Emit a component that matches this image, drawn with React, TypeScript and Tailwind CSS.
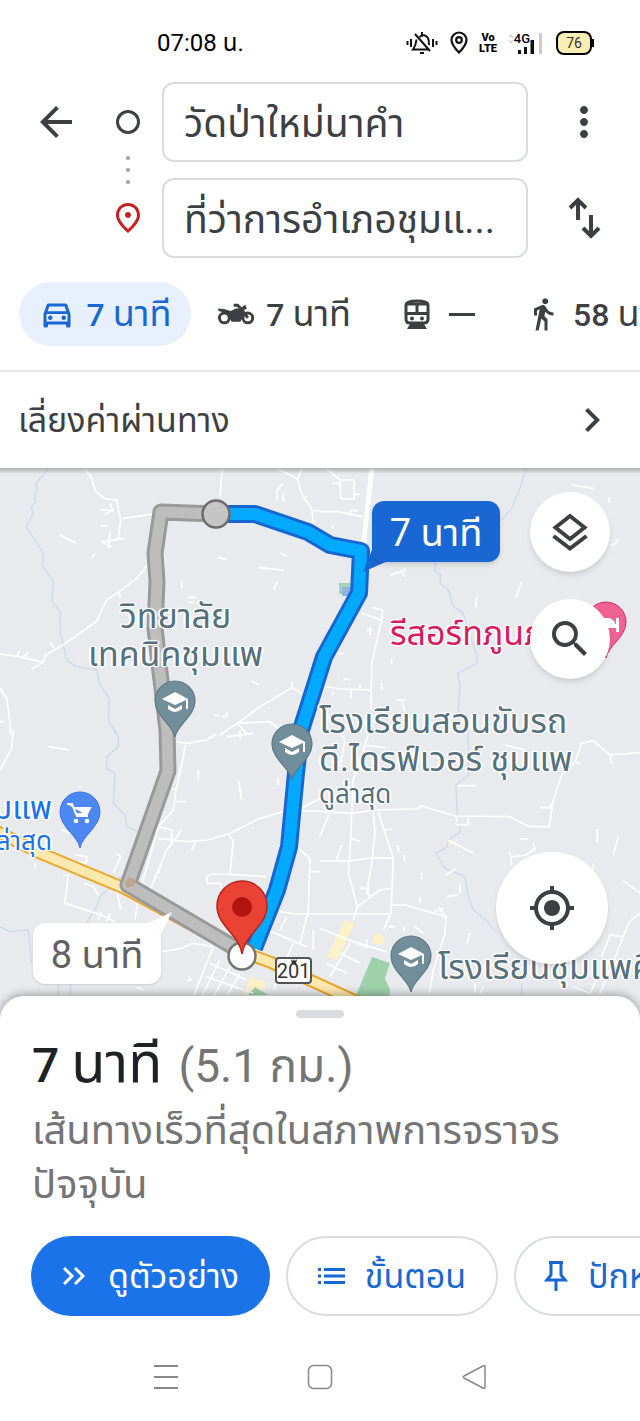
import { useState, type ReactNode } from "react";
import {
  MdArrowBack,
  MdChevronRight,
  MdDirectionsWalk,
  MdGpsFixed,
  MdMoreVert,
  MdOutlineDirectionsCar,
  MdOutlinePlace,
  MdSearch,
} from "react-icons/md";

const PIN = "M0 36C-2 24-20 15-20 0A20 20 0 1 1 20 0C20 15 2 24 0 36Z";

function SchoolPin({ x, y }: { x: number; y: number }) {
  return (
    <g transform={`translate(${x} ${y})`}>
      <path d={PIN} fill="#738e9b" stroke="#5c7884" strokeWidth="1.2" />
      <path d="M0-9L-13-2 0 4 11-1V8H13V-2ZM-7 4V8Q0 14 7 8V4L0 8Z" fill="#fff" />
    </g>
  );
}

function StatusIcons() {
  return (
    <div className="flex items-center gap-3">
      <svg width="32" height="24" viewBox="0 0 32 24" fill="none" stroke="#111" strokeWidth="2">
        <path d="M1.500 10v4M5 8v8M27 8v8M30.500 10v4M9 3l15 17M13.500 6q5-4 8.500 1 1 2 1 7M10.500 8.500q-.5 6-3.500 10h16M16 1v3M14 22h4" />
      </svg>
      <svg width="18" height="24" viewBox="0 0 18 24" fill="none" stroke="#111" strokeWidth="2.200">
        <path d="M9 21.500Q1.500 14 1.500 9a7.500 7.500 0 0 1 15 0Q16.500 14 9 21.500Z" />
        <circle cx="9" cy="9" r="2.800" />
      </svg>
      <div className="flex w-4 flex-col items-center font-['Liberation_Sans_Narrow','Roboto'] text-[11px] leading-[11px] font-black text-black">
        <span>Vo</span>
        <span>LTE</span>
      </div>
      <div className="flex h-6 w-9 items-start">
        <svg width="7" height="20" viewBox="0 0 7 20" fill="none" stroke="#ccc" strokeWidth="1.500">
          <path d="M1 6l2.500-3L6 6M1 9l2.500 3L6 9" />
        </svg>
        <span className="h-3 text-[13px] leading-4 font-medium text-black">4G</span>
        <svg width="26" height="24" viewBox="0 0 26 24" className="-ml-3 shrink-0">
          <path d="M0 19h3v4H0zM6 16h3v7H6zM12.500 9H16v14h-3.500z" fill="#111" />
          <path d="M21 2h3v21h-3z" fill="#ccc" />
        </svg>
      </div>
      <div className="flex items-center">
        <span className="flex h-6 w-9 items-center justify-center rounded-lg border-2 border-black bg-[#fbeeb5] text-sm text-[#333]">
          76
        </span>
        <span className="h-2 w-0.5 bg-black" />
      </div>
    </div>
  );
}

function MapDrawing() {
  return (
    <svg
      viewBox="0 468 640 548"
      preserveAspectRatio="xMidYMid slice"
      className="absolute inset-0 h-full w-full"
      role="img"
      aria-label="แผนที่เส้นทาง"
    >
      <rect x="-2000" y="0" width="5000" height="2000" fill="#e8eaee" />
      <g fill="none" stroke="#cfd9ec" strokeWidth="4" strokeLinejoin="round">
        <path
          transform="translate(0 465) scale(.33333)"
          d="M145 10L125 35 108 55 112 75 103 95 108 110 95 125 98 150 78 185 105 225 130 265 128 305 160 350 155 410 182 440 180 500 200 585 230 605 290 615 300 660 328 700 325 770 355 810"
        />
        <path
          transform="translate(320 465) scale(.33333)"
          d="M618 10L600 70 575 130 550 160 400 240 345 290V318L362 330 360 355 385 375 400 425 430 445 470 570 472 595 412 625 420 660 415 735 445 795"
        />
        <path
          transform="translate(0 730) scale(.33333)"
          d="M340 0L355 20V50L320 80V115L345 130 340 220 375 255 380 290 415 305M375 430L300 500 290 530 220 640 210 800M0 590L30 605 85 600 90 650 95 700M175 765V795"
        />
        <path
          transform="translate(320 730) scale(.33333)"
          d="M445 0V135L408 165 412 270 423 305 385 330 382 350 348 370 375 415 435 440 445 500 460 540 505 575 525 605M605 760V800"
        />
      </g>
      <g fill="#fdf1c8">
        <path d="M345 920l10 3-18 37-10-3zM375 932l10 5-3 8-10-2zM250 977l17 6-7 12h-15z" />
        <path d="M448 841l14 7-14-5z" />
      </g>
      <path d="M372 957l18 6-5 15 5 12-2 20h-38zM255 987l13 8h-20z" fill="#9fd2ab" />
      <path d="M339 583h11v11h-11z" fill="#a3d3b2" />
      <path d="M342 587h10v9h-10z" fill="#8fb0e8" />
      <g fill="none" stroke="#fff" strokeWidth="5" strokeLinejoin="round">
        <path
          transform="translate(0 465) scale(.33333)"
          d="M255 10L275 40 288 80 312 100 350 105 362 165 355 220M368 160L460 147M667 10L660 95M0 567L60 575 130 592 137 570 190 540 290 468 320 405 355 382 410 340 443 300M355 382L362 400M50 575l8-18M65 580l20-18M130 592l-35 20M150 530l12 20M180 210L228 235M285 265l-10 13M655 278l25 5M775 308l75 7M840 265l20 8M545 348v22M832 350l-12 25M565 397h22M565 412h18M305 230L375 220M330 200L325 250M305 230l30 15M300 135h35l-20 15M330 115l10 25M302 183h22M830 10L893 42 903 80 912 100 935 130 940 175M893 42L905 12M912 100l8-8M935 137h25M848 55L830 80 832 105M850 85v25M755 648l22 12M642 750h15M680 740v15h-15M660 810L712 775 780 725 875 668 905 685M875 668v-20M712 775L810 770 840 795M712 775L745 810M0 670L20 700 30 770 32 810M0 770h12"
        />
        <path
          transform="translate(320 465) scale(.33333)"
          d="M0 140H50L130 155M88 152l5-15h20M20 10L60 45 62 100 102 103V45H60M35 55h25M102 88h18M755 60L822 70M868 95v20M895 220q-5 20-25 20M605 350L588 398M470 395l-3 32M210 330L245 320 255 335M245 322l12-10M125 445L185 465 188 435 158 428M185 465L165 550 155 600 153 735M150 485v25M140 495h18M20 665L60 672 153 675M120 672v-15M93 675v25M70 640l20 5M215 578v20M185 655v20M230 705h28M245 705l10 35M50 565h20M38 690v-10M40 190l-5-10"
        />
        <path
          transform="translate(0 730) scale(.33333)"
          d="M530 35L560 40 620 30 650 10M555 45L550 80 528 180 520 240 475 290 415 500 405 570M515 178h15M530 215h28M475 325L560 335 620 330 685 312 780 265 850 245M475 290L515 300V335M685 312l15 20L690 430M545 300L500 360 450 480M680 20L760 10M720 0v25M595 120v30M715 150l10 60M835 145v20M145 50l63 10M40 0L35 55 0 120M575 360l12-25M475 430l10-30M190 435h22M205 435L195 520 290 550 345 575M250 460l30 10 15 25M350 370l12 10-22 50M362 540l-12-60M620 440l20-8 80 3 80 5M620 440v20h40l10 50M890 243L960 243M905 235l55-30M890 350l40 35-5 155-25 100M930 425h30M840 545l50 7H960M780 590l140 60M840 600l20-40M485 665l60-10 35-15 60 10M640 650L580 800M620 740L760 790M660 690L605 800M690 710L640 800M720 730L680 800M630 700L740 750M565 740l10 10-15 2M410 770l20 10M940 600v60M880 640L820 780M225 375l35 5v18h-30M185 300l40 15M105 400v15M330 550l-10 25M305 545l-12 25"
        />
        <path
          transform="translate(320 730) scale(.33333)"
          d="M55 0L75 30 60 110M150 0L130 60 100 150 95 250M130 45l65 8M0 245L100 250 160 240 290 237 305 228 405 258 570 260 628 290H688L700 210 725 135 765 95 785 40 820 32 870 75 960 68M870 75l5 25M765 95l15 8M662 233h30v-15M410 262v22h35v-22M415 167h53M30 245L0 320M95 250L92 330 85 430 112 530 100 570M160 245L165 310 155 400 140 490 155 500M120 475h25v20M175 245L205 340 220 385 213 550 190 600M0 393H85L160 383 220 385M112 530L180 480 213 475M0 552H213M213 525H255L378 560 375 610 340 720 328 790M355 530l20 28M345 545l25-10M385 330L460 370M378 435l30-20M380 500l35-5M420 465v25M305 430v20M300 500v20M235 345v20M250 375l5 18M832 298v38M895 320l-15 55M910 453l50 35M960 550L928 575 910 620 870 615 845 680M910 620L870 720 840 790M600 327h25M570 365l5 40M575 380L620 375 645 355 640 340M50 390l15-45M95 325l25 10M195 300l20-3M0 595L100 635 200 665M60 670l60 30M30 740L90 640M20 700l60 30M110 640l30 12v-25M465 760v30M440 640l10-30M250 605l5-15M205 590h20M285 590l25 20M820 400v20M640 540v-15M555 45l60 15M760 770l50 20 20-40M480 790l10-20"
        />
        <path d="M372 468L363 548" />
      </g>
      <g fill="none" strokeLinejoin="round">
        <path d="M-100 788L0 833 40 853 124 888 242 952 270 962 380 1012" stroke="#eba72c" strokeWidth="13" />
        <path d="M-100 788L0 833 40 853 124 888 242 952 270 962 380 1012" stroke="#fde8ad" strokeWidth="9" />
        <path d="M216 514L161 512 155 553 157 582 155 628 160 672 167 730 168 771 128 885 242 952" stroke="#999" strokeWidth="17" />
        <path d="M216 514L161 512 155 553 157 582 155 628 160 672 167 730 168 771 128 885 242 952" stroke="#bdbdbd" strokeWidth="11" />
        <path d="M125 882l4-5 7 3-2 6-8 2z" fill="#c0a48e" />
        <path d="M216 514H255L308 532 330 545 361 551 359 593 324 657 301 730 296 773 289 847 277 890 254 948" stroke="#1766d0" strokeWidth="18" />
        <path d="M216 514H255L308 532 330 545 361 551 359 593 324 657 301 730 296 773 289 847 277 890 254 948" stroke="#03a9ff" strokeWidth="12" />
      </g>
      <circle cx="216" cy="514" r="13.500" fill="#c5c5c5" stroke="#6d6d6d" strokeWidth="2.500" />
      <circle cx="242" cy="956" r="13.500" fill="#fff" stroke="#757575" strokeWidth="2.500" />
      <SchoolPin x={175} y={701} />
      <SchoolPin x={292} y={744} />
      <SchoolPin x={411} y={956} />
      <g transform="translate(80 812)">
        <path d={PIN} fill="#4d87f2" stroke="#3d75dd" />
        <path d="M-13-8h5l5 12H8M-7-4H10L7 2H-5" fill="#fff" stroke="#fff" strokeWidth="2" />
        <circle cx="-4" cy="9" r="2.300" fill="#fff" />
        <circle cx="7" cy="9" r="2.300" fill="#fff" />
      </g>
      <g transform="translate(606 622)">
        <path d={PIN} fill="#f06292" stroke="#d92a6b" />
        <path d="M-13-7h3v9h20v-6h3v14h-3v-4h-20v4h-3zM-8-4h12l5 4v3H-8z" fill="#fff" />
      </g>
      <path
        d="M242 954C239 934 217 926 217 906A25 25 0 0 1 267 906C267 926 245 934 242 954Z"
        fill="#ea4335"
        stroke="#b3261e"
        strokeWidth="1.500"
      />
      <circle cx="242" cy="907" r="10" fill="#b31412" />
      <path d="M372 550L363 572 390 560z" fill="#1967d2" />
      <path d="M146 924l26-12-12 24z" fill="#fff" />
    </svg>
  );
}

const halo =
  "[text-shadow:0_0_2px_#fff,1px_1px_1px_#fff,-1px_-1px_1px_#fff,1px_-1px_1px_#fff,-1px_1px_1px_#fff,2px_0_1px_#fff,-2px_0_1px_#fff]";

function MapLabel({ className, children }: { className: string; children: ReactNode }) {
  return <div className={`absolute whitespace-nowrap ${halo} ${className}`}>{children}</div>;
}

function MapView() {
  return (
    <section className="relative h-[548px] overflow-hidden" aria-label="แผนที่">
      <MapDrawing />
      <MapLabel className="top-[129px] left-[88px] text-center text-[34px] leading-[38px] text-[#56707c]">
        วิทยาลัย
        <br />
        เทคนิคชุมแพ
      </MapLabel>
      <MapLabel className="top-[234px] left-[319px] text-[34px] leading-[38px] text-[#56707c]">
        โรงเรียนสอนขับรถ
        <br />
        ดี.ไดรฟ์เวอร์ ชุมแพ
        <div className="text-[26px] leading-8">ดูล่าสุด</div>
      </MapLabel>
      <MapLabel className="top-[146px] left-[390px] text-[34px] leading-[38px] text-[#d81b60]">รีสอร์ทภูนภา</MapLabel>
      <MapLabel className="top-[480px] left-[438px] text-[34px] leading-[38px] text-[#56707c]">โรงเรียนชุมแพศึกษา</MapLabel>
      <MapLabel className="top-[323px] right-[588px] text-right text-[32px] leading-[34px] text-[#1a73e8]">
        ชุมแพ
        <div className="text-[26px] leading-8">ดูล่าสุด</div>
      </MapLabel>
      <div className="absolute top-[489px] left-[275px] flex h-[27px] w-[37px] items-center justify-center rounded-sm border-2 border-[#555] bg-white font-['Roboto'] text-xl text-[#333]">
        201
        <svg width="6" height="5" viewBox="0 0 6 5" fill="currentColor" className="absolute top-0">
          <path d="M0 0l2 2 1-2 1 2 2-2-1 5H1z" />
        </svg>
      </div>
      <div className="absolute top-[33px] left-[372px] flex h-[61px] w-32 items-center justify-center rounded-xl bg-[#1967d2] pt-1 text-[38px] whitespace-nowrap text-white shadow-md">
        7 นาที
      </div>
      <div className="absolute top-[455px] left-[33px] flex h-[61px] w-32 items-center justify-center rounded-xl bg-white pt-1 text-[38px] whitespace-nowrap text-[#616161] shadow-sm">
        8 นาที
      </div>
      <div className="pointer-events-none absolute inset-x-0 top-0 h-1.5 bg-linear-to-b from-black/25 to-transparent" />
      <button
        type="button"
        aria-label="ชั้นข้อมูล"
        className="absolute top-6 right-[30px] flex size-20 items-center justify-center rounded-full bg-white text-[#3c4043] shadow-md"
      >
        <svg width="36" height="40" viewBox="0 0 36 40" fill="none" stroke="currentColor" strokeWidth="4">
          <path d="M18 4L32.500 15.500 18 27 3.500 15.500ZM1.500 24L18 36.500 34.500 24" />
        </svg>
      </button>
      <button
        type="button"
        aria-label="ค้นหา"
        className="absolute top-[131px] right-[30px] flex size-20 items-center justify-center rounded-full bg-white text-[#3c4043] shadow-md"
      >
        <MdSearch size={48} />
      </button>
      <button
        type="button"
        aria-label="ตำแหน่งของฉัน"
        className="absolute top-96 right-8 flex size-28 items-center justify-center rounded-full bg-white text-[#3c4043] shadow-md"
      >
        <MdGpsFixed size={48} />
      </button>
    </section>
  );
}

function TrainIcon() {
  return (
    <svg width="28" height="32" viewBox="0 0 28 32" fill="none" stroke="currentColor" strokeWidth="3">
      <path d="M3 7Q3 3 14 3T25 7V21q0 4-4 4H7q-4 0-4-4Z" />
      <path d="M3 6h22M3 15.500h22M14 6v9" />
      <circle cx="9" cy="20.500" r="2" fill="currentColor" stroke="none" />
      <circle cx="19" cy="20.500" r="2" fill="currentColor" stroke="none" />
      <path d="M7 26h14l3 5H4z" fill="currentColor" stroke="none" />
    </svg>
  );
}

function MotorcycleIcon() {
  return (
    <svg width="37" height="22" viewBox="0 0 37 22" fill="none" stroke="currentColor" strokeWidth="3">
      <circle cx="6.500" cy="15" r="5" />
      <circle cx="30.500" cy="15" r="5" />
      <path d="M16 2h4l4 4 6.500 9" />
      <path d="M0 5.500l6 .5 7 2 5-2.500h7l2 5-4 8.500h-9l-3-5-5-4.500-5.500-1.500zM24 4l4-2.500 1.500 4.500-3.500 1z" fill="currentColor" stroke="none" />
    </svg>
  );
}

function Minutes({ value }: { value: number }) {
  return (
    <span className="flex items-baseline gap-2">
      <span className="text-[32px] leading-10 font-medium">{value}</span>
      <span className="text-[36px] leading-10">นาที</span>
    </span>
  );
}

export default function App() {
  const [from, setFrom] = useState("วัดป่าใหม่นาคำ");
  const [to, setTo] = useState("ที่ว่าการอำเภอชุมแ...");
  const field =
    "h-20 w-full min-w-0 rounded-xl border-2 border-[#dadce0] bg-white px-5 pt-1.5 text-[39px] text-[#3c4043] outline-none";
  const mode = "flex h-16 shrink-0 items-center whitespace-nowrap";

  return (
    <div className="w-full overflow-hidden bg-white font-['Roboto','Noto_Sans_Thai','Noto_Sans',sans-serif] text-[#3c4043]">
      <div className="flex h-[82px] items-center justify-between pt-1 pr-[46px] pl-[157px]">
        <span className="text-2xl text-black">07:08 น.</span>
        <StatusIcons />
      </div>

      <header>
        <form className="grid grid-cols-[94px_68px_1fr_112px] items-center gap-y-4">
          <button type="button" aria-label="ย้อนกลับ" className="pl-8">
            <MdArrowBack size={48} />
          </button>
          <label htmlFor="from" aria-label="ต้นทาง" className="relative flex h-20 items-center justify-center">
            <span className="size-6 rounded-full border-3 border-[#3c4043]" />
            <span className="absolute top-[74px] flex flex-col gap-2">
              <i className="size-1 rounded-full bg-[#9aa0a6]" />
              <i className="size-1 rounded-full bg-[#9aa0a6]" />
              <i className="size-1 rounded-full bg-[#9aa0a6]" />
            </span>
          </label>
          <input id="from" className={field} value={from} onChange={(e) => setFrom(e.target.value)} />
          <button type="button" aria-label="ตัวเลือกเพิ่มเติม" className="flex justify-center">
            <MdMoreVert size={48} />
          </button>
          <span />
          <label htmlFor="to" aria-label="ปลายทาง" className="flex justify-center text-[#c5221f]">
            <MdOutlinePlace size={36} />
          </label>
          <input id="to" className={field} value={to} onChange={(e) => setTo(e.target.value)} />
          <button type="button" aria-label="สลับต้นทางและปลายทาง" className="flex justify-center">
            <svg width="34" height="42" viewBox="0 0 34 42" fill="none" stroke="currentColor" strokeWidth="4">
              <path d="M11 23V4M3 11l8-8 8 8M24 18v20M16 31l8 8 8-8" />
            </svg>
          </button>
        </form>

        <nav className="flex h-[114px] items-center overflow-hidden border-b-2 border-[#e8eaed] pl-[19px]">
          <button type="button" className={`${mode} w-[172px] justify-center gap-3 rounded-full bg-[#e8f0fe] text-[#1967d2]`}>
            <MdOutlineDirectionsCar size={36} />
            <Minutes value={7} />
          </button>
          <button type="button" className={`${mode} ml-[27px] w-[133px] gap-3`}>
            <MotorcycleIcon />
            <Minutes value={7} />
          </button>
          <button type="button" className={`${mode} ml-[52px] gap-[18px]`}>
            <TrainIcon />
            <span className="h-[3px] w-[26px] bg-[#3c4043]" />
          </button>
          <button type="button" className={`${mode} ml-[50px] gap-3`}>
            <MdDirectionsWalk size={36} />
            <Minutes value={58} />
          </button>
        </nav>

        <button type="button" className="flex h-24 w-full items-center justify-between pr-6 pl-[18px] text-[34px]">
          เลี่ยงค่าผ่านทาง
          <MdChevronRight size={48} />
        </button>
      </header>

      <main>
        <MapView />

        <section className="relative -mt-5 rounded-t-3xl bg-white pt-3.5 shadow-[0_-2px_8px_rgba(0,0,0,0.3)]">
          <div className="mx-auto h-2 w-12 rounded-full bg-[#dadce0]" />
          <h1 className="mt-[11px] flex items-baseline gap-4 px-8 text-5xl leading-[68px] whitespace-nowrap text-[#202124]">
            <span className="flex items-baseline gap-3">
              <span className="font-medium">7</span>
              <span className="text-[56px]">นาที</span>
            </span>
            <span className="text-[46px] text-[#757575]">(5.1 กม.)</span>
          </h1>
          <p className="px-8 pt-1 text-[40px] leading-[54px] text-[#757575]">เส้นทางเร็วที่สุดในสภาพการจราจรปัจจุบัน</p>
          <div className="mt-6 flex gap-4 overflow-hidden pl-[31px] text-[34px] whitespace-nowrap text-[#1967d2]">
            <button type="button" className="flex h-20 w-[239px] shrink-0 items-center justify-center gap-[22px] rounded-full bg-[#1a73e8] text-white">
              <svg width="24" height="20" viewBox="0 0 24 20" fill="none" stroke="currentColor" strokeWidth="3">
                <path d="M2 2l8 8-8 8M13 2l8 8-8 8" />
              </svg>
              ดูตัวอย่าง
            </button>
            <button type="button" className="flex h-20 w-[212px] shrink-0 items-center justify-center gap-5 rounded-full border-2 border-[#dadce0]">
              <svg width="27" height="16" viewBox="0 0 27 16" fill="currentColor">
                <path d="M0 0h3v3H0zM6 0h21v3H6zM0 6.500h3v3H0zM6 6.500h21v3H6zM0 13h3v3H0zM6 13h21v3H6z" />
              </svg>
              ขั้นตอน
            </button>
            <button type="button" className="flex h-20 shrink-0 items-center gap-5 rounded-full border-2 border-[#dadce0] px-7">
              <svg width="24" height="32" viewBox="0 0 24 32" fill="none" stroke="currentColor" strokeWidth="3">
                <path d="M5 2.500h14M7 3v12l-4 5h18l-4-5V3M12 20v11" />
              </svg>
              ปักหมุด
            </button>
          </div>
        </section>
      </main>

      <footer className="relative flex h-[105px] items-center justify-center gap-32 bg-white pt-4 text-[#888]">
        <button type="button" aria-label="แอปล่าสุด">
          <svg width="26" height="26" viewBox="0 0 26 26" stroke="currentColor" strokeWidth="2">
            <path d="M1 2h24M1 13h24M1 24h24" />
          </svg>
        </button>
        <button type="button" aria-label="หน้าแรก">
          <svg width="26" height="26" viewBox="0 0 26 26" fill="none" stroke="currentColor" strokeWidth="1.500">
            <rect x="1.500" y="1.500" width="23" height="23" rx="5" />
          </svg>
        </button>
        <button type="button" aria-label="กลับ">
          <svg width="26" height="26" viewBox="0 0 26 26" fill="none" stroke="currentColor" strokeWidth="1.500" strokeLinejoin="round">
            <path d="M22 2L3 12q-1.500 1 0 2l19 10q2 1 2-1V3q0-2-2-1Z" />
          </svg>
        </button>
      </footer>
    </div>
  );
}
